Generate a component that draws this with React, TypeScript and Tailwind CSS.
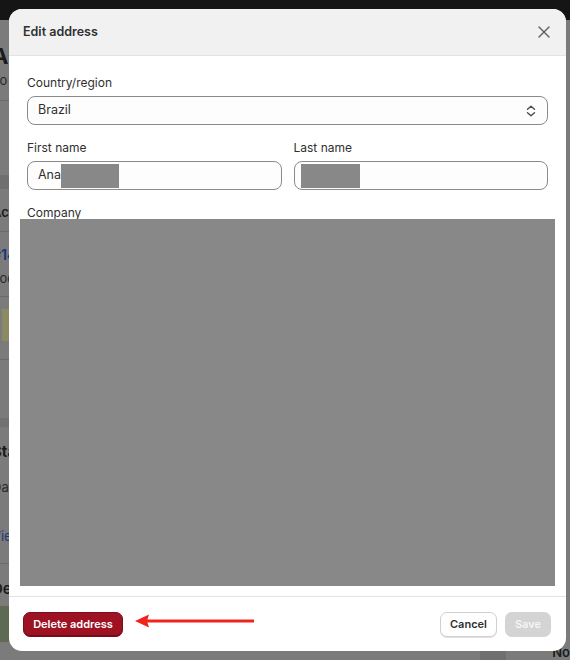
import type { ReactNode } from "react";

const FONT = "font-['Inter','Liberation_Sans',sans-serif]";

function Field({ label, children }: { label: string; children: ReactNode }) {
  return (
    <div className="flex flex-col gap-[3px]">
      <span className="text-[12px] leading-5 text-[#303030]">{label}</span>
      {children}
    </div>
  );
}

function TextBox({ value, redactWidth }: { value?: string; redactWidth: number }) {
  return (
    <div className="flex h-[29px] items-center rounded-[8px] border border-[#8a8a8a] bg-[#fdfdfd] pl-[10px]">
      {value ? <span className="text-[12.5px] text-[#303030]">{value}</span> : null}
      <span
        className="h-[24px] bg-[#888888]"
        style={{ width: redactWidth, marginLeft: value ? 0 : -4 }}
      />
    </div>
  );
}

// dimmed page that sits behind the dialog
function PageBehind() {
  return (
    <div className="flex h-full flex-col bg-[#7b7b7b]">
      <div className="h-[20px] shrink-0 bg-[#151515]" />
      <div className="flex flex-1 justify-between">
        <div className="-ml-[8px] flex w-[200px] flex-col text-[#1b1b1b]">
          <div className="mt-[22px] text-[22px] font-bold leading-7">An</div>
          <div className="text-[13px] leading-5 text-[#2a2a2a]">To</div>
          <div className="mt-[10px] border-b border-[#6a6a6a]" />
          <div className="mt-[74px] h-[14px] bg-[#6f6f6f]" />
          <div className="mt-[14px] text-[13px] font-semibold">Act c</div>
          <div className="mt-[8px] border-b border-[#6a6a6a]" />
          <div className="mt-[12px] text-[14px] font-bold text-[#1b3a78]">#14</div>
          <div className="mt-[4px] text-[13px] text-[#2a2a2a]">Today</div>
          <div className="mt-[8px] border-b border-[#6a6a6a]" />
          <div className="ml-[10px] mt-[12px] h-[32px] w-[10px] bg-[#8c8a62]" />
          <div className="mt-[18px] border-b border-[#6a6a6a]" />
          <div className="mt-[58px] h-[9px] bg-[#717171]" />
          <div className="mt-[14px] text-[15px] font-bold">Staf</div>
          <div className="mt-[14px] text-[13px] text-[#2a2a2a]">Data c</div>
          <div className="mt-[30px] text-[13px] text-[#1b3a78]">View a</div>
          <div className="mt-[16px] border-b border-[#6a6a6a]" />
          <div className="mt-[14px] text-[15px] font-semibold">Del</div>
          <div className="ml-[8px] mt-[6px] h-[36px] w-[10px] bg-[#5f6a55]" />
        </div>
        <div className="flex w-[100px] flex-col items-end justify-end">
          <div className="flex h-[12px] w-full items-end justify-between">
            <div className="ml-[10px] h-full w-[26px] bg-[#707070]" />
            <span className="text-[13px] font-semibold leading-4 text-[#1b1b1b]">No</span>
          </div>
        </div>
      </div>
    </div>
  );
}

export default function App() {
  return (
    <div className={`relative h-[660px] w-[570px] overflow-hidden ${FONT}`}>
      <PageBehind />

      <div className="absolute left-[9px] top-[9px] flex h-[642px] w-[557px] flex-col overflow-hidden rounded-[13px] bg-white">
        <div className="flex h-[47px] shrink-0 items-center justify-between border-b border-[#e3e3e3] bg-[#f1f1f1] pl-[14px] pr-[16px]">
          <h2 className="text-[12.5px] font-semibold text-[#303030]">Edit address</h2>
          <svg width="12" height="12" viewBox="0 0 12 12" fill="none">
            <path d="M1 1l10 10M11 1L1 11" stroke="#5c5c5c" strokeWidth="1.4" strokeLinecap="round" />
          </svg>
        </div>

        <div className="relative flex flex-1 flex-col gap-[13px] px-[18px] pt-[17px]">
          <Field label="Country/region">
            <div className="flex h-[29px] items-center justify-between rounded-[8px] border border-[#8a8a8a] bg-[#fdfdfd] pl-[10px] pr-[11px]">
              <span className="text-[12.5px] text-[#303030]">Brazil</span>
              <svg width="10" height="12" viewBox="0 0 10 12" fill="none">
                <path d="M1.5 4.2L5 1.2l3.5 3M1.5 7.8L5 10.8l3.5-3" stroke="#4a4a4a" strokeWidth="1.4" strokeLinecap="round" strokeLinejoin="round" />
              </svg>
            </div>
          </Field>

          <div className="grid grid-cols-2 gap-[12px]">
            <Field label="First name">
              <TextBox value="Ana" redactWidth={58} />
            </Field>
            <Field label="Last name">
              <TextBox redactWidth={59} />
            </Field>
          </div>

          <Field label="Company">
            <div className="h-[20px]" />
          </Field>

          {/* redacted form body */}
          <div className="absolute left-[11px] top-[163px] h-[367px] w-[535px] bg-[#888888]" />
        </div>

        <div className="flex h-[55px] shrink-0 items-center justify-between border-t border-[#e3e3e3] pl-[14px] pr-[15px]">
          <button
            type="button"
            className="h-[25px] w-[100px] rounded-[7px] border border-[#7e0d1b] bg-[#9e1324] text-[11px] font-semibold text-white shadow-[inset_0_-1px_0_#6f0a16]"
          >
            Delete address
          </button>
          <div className="flex gap-[8px]">
            <button
              type="button"
              className="h-[25px] w-[57px] rounded-[7px] border border-[#d0d0d0] bg-white text-[11px] font-semibold text-[#303030] shadow-[0_1px_0_#e3e3e3]"
            >
              Cancel
            </button>
            <button
              type="button"
              className="h-[25px] w-[46px] rounded-[7px] bg-[#d4d4d4] text-[11px] font-semibold text-[#f4f4f4]"
            >
              Save
            </button>
          </div>
        </div>
      </div>

      {/* callout arrow pointing at the delete button */}
      <svg className="absolute left-[133px] top-[613px]" width="124" height="16" viewBox="0 0 124 16">
        <path d="M12 8H121" stroke="#f0241a" strokeWidth="3" />
        <path d="M2 8L16 1.5L14 8L16 14.5Z" fill="#f0241a" />
      </svg>
    </div>
  );
}
